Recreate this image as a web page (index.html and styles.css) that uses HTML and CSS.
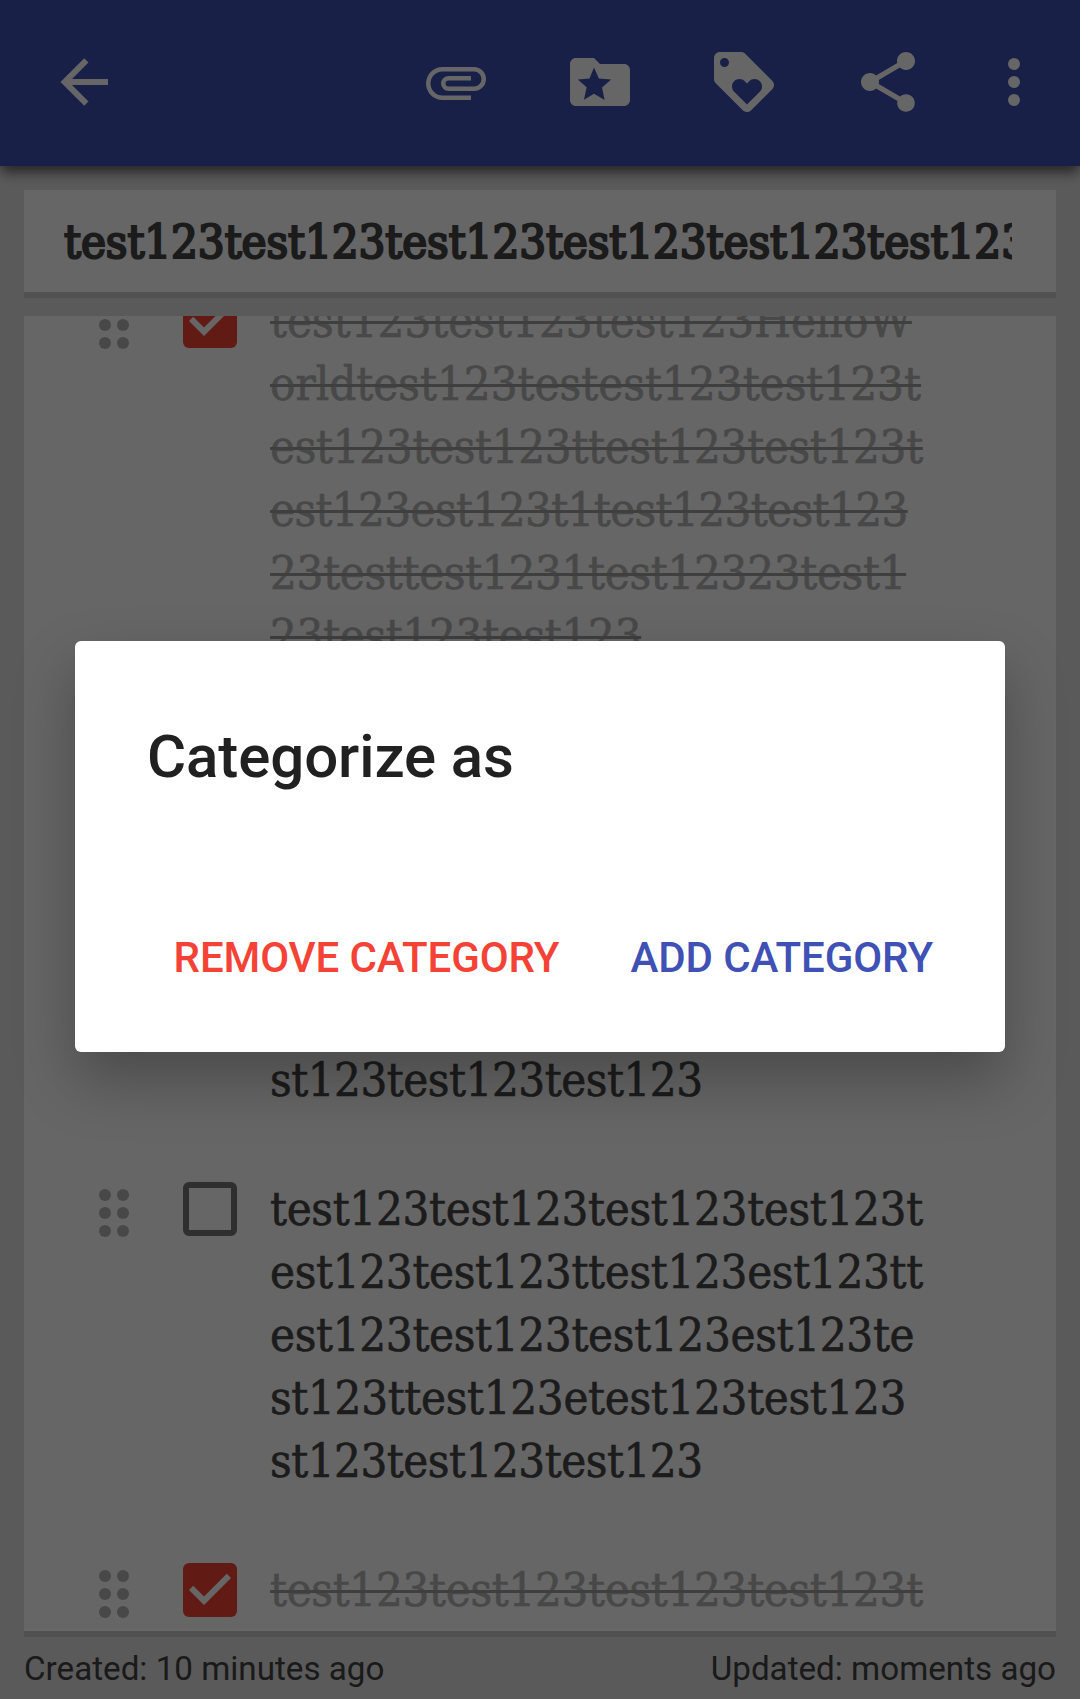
FILE: index.html
```html
<!DOCTYPE html>
<html lang="en">
<head>
<meta charset="utf-8">
<title>Checklist</title>
<link rel="stylesheet" href="styles.css">
</head>
<body>
<div class="screen">
  <header class="app-bar">
    <svg class="icon icon-back" viewBox="0 0 24 24"><path d="M20 11v2H8l5.5 5.5-1.42 1.42L4.16 12l7.92-7.92L13.5 5.5 8 11z"/></svg>
    <svg class="icon" viewBox="0 0 24 24"><path d="M7.5 18A5.5 5.5 0 0 1 2 12.5 5.5 5.5 0 0 1 7.5 7H18a4 4 0 0 1 0 8H9.5a2.5 2.5 0 0 1 0-5H17v1.5H9.5a1 1 0 0 0 0 2H18a2.5 2.5 0 0 0 0-5H7.5a4 4 0 0 0 0 8H17V18z"/></svg>
    <svg class="icon" viewBox="0 0 24 24"><path fill-rule="evenodd" d="M4 4h6l2 2h8c1.1 0 2 .9 2 2v10c0 1.1-.9 2-2 2H4c-1.1 0-2-.9-2-2V6c0-1.1.9-2 2-2zM10 7.2L8.5 10.8l-3.9.35 2.95 2.6-.9 4.2L10 15.95l3.55 2.05-.88-4.2 3.05-2.65-4.1-.35z"/></svg>
    <svg class="icon" viewBox="0 0 24 24"><path d="M21.41 11.58l-9-9C12.05 2.22 11.55 2 11 2H4c-1.1 0-2 .9-2 2v7c0 .55.22 1.05.59 1.42l9 9c.36.36.86.58 1.41.58.55 0 1.05-.22 1.41-.59l7-7c.37-.36.59-.86.59-1.41 0-.55-.23-1.06-.59-1.42zM5.5 7C4.67 7 4 6.33 4 5.5S4.67 4 5.5 4 7 4.67 7 5.5 6.33 7 5.5 7zm11.77 8.27L13 19.54l-4.27-4.27C8.28 14.81 8 14.19 8 13.5c0-1.38 1.12-2.5 2.5-2.5.69 0 1.32.28 1.77.74l.73.72.73-.73c.45-.45 1.08-.73 1.77-.73 1.38 0 2.5 1.12 2.5 2.5 0 .69-.28 1.32-.73 1.77z"/></svg>
    <svg class="icon" viewBox="0 0 24 24"><path d="M18 16.08c-.76 0-1.44.3-1.96.77L8.91 12.7c.05-.23.09-.46.09-.7s-.04-.47-.09-.7l7.05-4.11c.54.5 1.25.81 2.04.81 1.66 0 3-1.34 3-3s-1.34-3-3-3-3 1.34-3 3c0 .24.04.47.09.7L8.04 9.81C7.5 9.31 6.79 9 6 9c-1.66 0-3 1.34-3 3s1.34 3 3 3c.79 0 1.5-.31 2.04-.81l7.12 4.16c-.05.21-.08.43-.08.65 0 1.61 1.31 2.92 2.92 2.92 1.61 0 2.92-1.31 2.92-2.92s-1.31-2.92-2.92-2.92z"/></svg>
    <svg class="icon icon-more" viewBox="0 0 24 24"><circle cx="12" cy="6" r="2"/><circle cx="12" cy="12" r="2"/><circle cx="12" cy="18" r="2"/></svg>
  </header>

  <main class="note">
    <div class="card title-card"><div class="note-title">test123test123test123test123test123test123</div></div>

    <div class="card list-card">
      <ul class="list">
        <li class="item done">
          <svg class="handle" viewBox="0 0 30 48"><circle cx="6" cy="6" r="6"/><circle cx="24" cy="6" r="6"/><circle cx="6" cy="24" r="6"/><circle cx="24" cy="24" r="6"/><circle cx="6" cy="42" r="6"/><circle cx="24" cy="42" r="6"/></svg>
          <span class="check"><svg viewBox="0 0 18 18"><path d="M7 14L2 9l1.41-1.41L7 11.17l7.59-7.59L16 5z"/></svg></span>
          <div class="text">
            <div><span class="loose">test123test123test123HelloW</span></div>
            <div><span class="loose">orldtest123testest123test123t</span></div>
            <div><span>est123test123ttest123test123t</span></div>
            <div><span class="tight">est123est123t1test123test123</span></div>
            <div><span>23testtest1231test12323test1</span></div>
            <div><span>23test123test123</span></div>
          </div>
        </li>
        <li class="item covered">
          <div class="text">
            <div><span class="short">st123test123test123</span></div>
          </div>
        </li>
        <li class="item">
          <svg class="handle" viewBox="0 0 30 48"><circle cx="6" cy="6" r="6"/><circle cx="24" cy="6" r="6"/><circle cx="6" cy="24" r="6"/><circle cx="24" cy="24" r="6"/><circle cx="6" cy="42" r="6"/><circle cx="24" cy="42" r="6"/></svg>
          <span class="check"></span>
          <div class="text">
            <div><span>test123test123test123test123t</span></div>
            <div><span>est123test123ttest123est123tt</span></div>
            <div><span>est123test123test123est123te</span></div>
            <div><span>st123ttest123etest123test123</span></div>
            <div><span class="short">st123test123test123</span></div>
          </div>
        </li>
        <li class="item done">
          <svg class="handle" viewBox="0 0 30 48"><circle cx="6" cy="6" r="6"/><circle cx="24" cy="6" r="6"/><circle cx="6" cy="24" r="6"/><circle cx="24" cy="24" r="6"/><circle cx="6" cy="42" r="6"/><circle cx="24" cy="42" r="6"/></svg>
          <span class="check"><svg viewBox="0 0 18 18"><path d="M7 14L2 9l1.41-1.41L7 11.17l7.59-7.59L16 5z"/></svg></span>
          <div class="text">
            <div><span>test123test123test123test123t</span></div>
          </div>
        </li>
      </ul>
    </div>
  </main>

  <footer class="meta"><span>Created: 10 minutes ago</span><span>Updated: moments ago</span></footer>
</div>

<div class="scrim">
  <section class="dialog" role="dialog">
    <h1 class="dialog-title">Categorize as</h1>
    <div class="actions">
      <button class="action remove">REMOVE CATEGORY</button>
      <button class="action add">ADD CATEGORY</button>
    </div>
  </section>
</div>
</body>
</html>
```
FILE: styles.css
```css
* { box-sizing: border-box; }

body {
  margin: 0;
  font-family: Roboto, sans-serif;
  overflow: hidden;
}

.screen {
  display: flex;
  flex-direction: column;
  height: 1699px;
  overflow: hidden;
  background: #e1e1e1;
}

/* App bar */
.app-bar {
  display: flex;
  flex: none;
  align-items: center;
  gap: 72px;
  height: 166px;
  padding: 0 30px 2px 48px;
  background: #3f51b5;
  box-shadow: 0 7px 12px -1px rgba(0, 0, 0, .6);
}
.icon {
  width: 72px;
  height: 72px;
  fill: #fff;
}
.icon-back { margin-right: auto; }
.icon-more { margin-left: -18px; }

/* Note cards */
.note {
  display: flex;
  flex-direction: column;
  gap: 18px;
  flex: none;
  padding: 24px 24px 0;
}
.card {
  background: #fff;
  border-bottom: 6px solid #cbcbcb;
}
.title-card {
  height: 108px;
  padding: 0 44px 0 40px;
}
.note-title {
  overflow: hidden;
  white-space: nowrap;
  font: 47px/104px "DejaVu Serif Condensed", "DejaVu Serif", serif;
  font-stretch: condensed;
  letter-spacing: -.1px;
  -webkit-text-stroke: 2.2px #454545;
  color: #454545;
}
.list-card {
  height: 1321px;
  overflow: hidden;
}
.list {
  margin: -27px 0 0;
  padding: 0 0 0 75px;
  list-style: none;
}
.item {
  display: flex;
  align-items: flex-start;
  padding-bottom: 66px;
}
.covered {
  padding-top: 315px;
  padding-left: 171px;
}
.handle {
  flex: none;
  width: 30px;
  height: 48px;
  margin: 12px 54px 0 0;
  fill: #b4b4b4;
}
.check {
  flex: none;
  width: 54px;
  height: 54px;
  margin: 5px 33px 0 0;
  border: 6px solid #757575;
  border-radius: 6px;
}
.done .check {
  border: 0;
  background: #f44336;
}
.check svg {
  display: block;
  width: 54px;
  height: 54px;
  fill: #fff;
}
.text {
  font: 47px/63px "DejaVu Serif Condensed", "DejaVu Serif", serif;
  font-stretch: condensed;
  letter-spacing: -.33px;
  white-space: nowrap;
  color: #464646;
  -webkit-text-stroke: .6px #464646;
}
.text .loose { letter-spacing: 0; }
.text .short { letter-spacing: -.5px; }
.text .tight { letter-spacing: -.63px; }
.done .text {
  color: #b4b4b4;
  -webkit-text-stroke-color: #b4b4b4;
}
.done .text span {
  text-decoration: line-through 3px #9e9e9e;
}

/* Timestamps */
.meta {
  display: flex;
  justify-content: space-between;
  padding: 0 24px;
  font-size: 33.2px;
  line-height: 64px;
  color: #424242;
}

/* Dialog */
.scrim {
  position: absolute;
  inset: 0;
  height: 1699px;
  padding: 641px 75px 0;
  background: rgba(0, 0, 0, .6);
}
.dialog {
  height: 411px;
  padding: 80px 72px 0;
  background: #fff;
  border-radius: 6px;
  box-shadow: 0 28px 60px rgba(0, 0, 0, .27);
}
.dialog-title {
  margin: 0;
  font-size: 60px;
  font-weight: 500;
  line-height: 72px;
  letter-spacing: -.1px;
  color: #212121;
}
.actions {
  display: flex;
  justify-content: flex-end;
  gap: 71px;
  padding-top: 135px;
}
.action {
  padding: 0;
  border: 0;
  background: none;
  font: 500 42px/60px Roboto, sans-serif;
  letter-spacing: -.1px;
}
.remove { color: #f44336; }
.add { color: #3f51b5; }
```
